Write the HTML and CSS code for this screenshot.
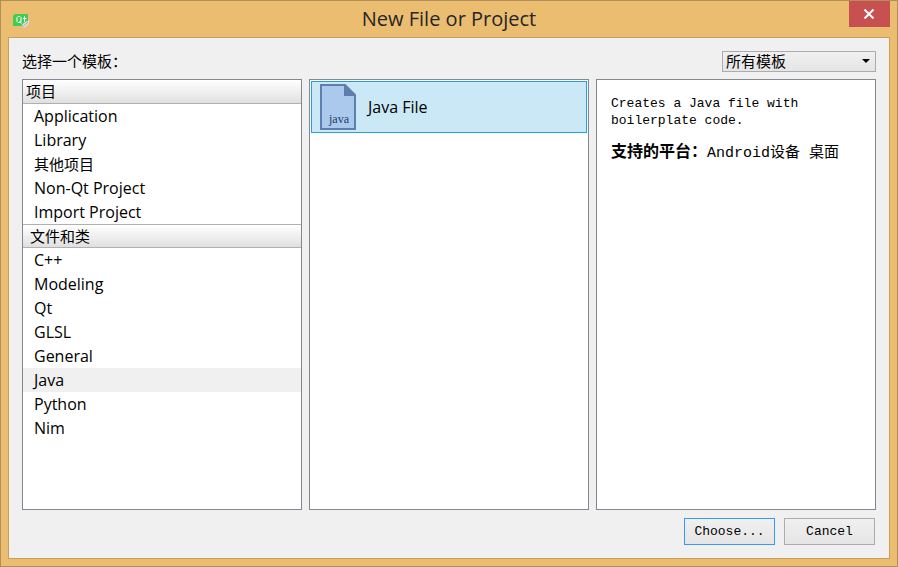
FILE: index.html
```html
<!DOCTYPE html>
<html lang="zh-CN">
<head>
  <meta charset="UTF-8">
  <title>New File or Project</title>
  <link rel="stylesheet" href="styles.css">
</head>
<body>
  <div class="window">
    <header class="titlebar">
      <svg class="app-icon" width="18" height="16" viewBox="0 0 18 16">
        <path d="M2 1H15V11L13 13H0V3Z" fill="#41cd52"/>
        <path d="M8 4.5V8.5L7 9.5H5L4 8.5V4.5L5 3.5H7ZM6.500 8L8.500 10.500M11.500 3V8.500L12.500 9.500M10 5.500H13.500" fill="none" stroke="#fff" stroke-width="1"/>
        <path d="M8.500 15L9.500 11L13 8.500L17 7L15 12L12 14.500Z" fill="#dedede"/>
        <path d="M9 14.500L15 9" stroke="#a8a8a8" fill="none"/>
      </svg>
      <h1>New File or Project</h1>
      <button class="close" type="button" aria-label="Close">
        <svg width="12" height="10" viewBox="0 0 12 10"><path d="M1.500 0.500L10.500 9.500M10.500 0.500L1.500 9.500" stroke="#fff" stroke-width="2"/></svg>
      </button>
    </header>

    <main class="client">
      <div class="top-row">
        <label for="filter">选择一个模板：</label>
        <div class="combo">
          <select id="filter">
            <option>所有模板</option>
          </select>
          <svg class="arrow" width="8" height="4" viewBox="0 0 8 4"><path d="M0 0H8L4 4Z" fill="#000"/></svg>
        </div>
      </div>

      <div class="panels">
        <nav class="panel categories">
          <h2>项目</h2>
          <ul>
            <li>Application</li>
            <li>Library</li>
            <li class="zh">其他项目</li>
            <li>Non-Qt Project</li>
            <li>Import Project</li>
          </ul>
          <h2 class="group">文件和类</h2>
          <ul>
            <li>C++</li>
            <li>Modeling</li>
            <li>Qt</li>
            <li>GLSL</li>
            <li>General</li>
            <li class="current">Java</li>
            <li>Python</li>
            <li>Nim</li>
          </ul>
        </nav>

        <section class="panel templates">
          <div class="template selected">
            <svg width="36" height="46" viewBox="0 0 36 46">
              <path d="M1 1H25L35 11V45H1Z" fill="#abc9ec" stroke="#5d7fae" stroke-width="2"/>
              <path d="M24 0L36 12H24Z" fill="#5d7fae"/>
              <text class="icon-text" x="9" y="39">java</text>
            </svg>
            <span>Java File</span>
          </div>
        </section>

        <section class="panel details">
          <p>Creates a Java file with boilerplate code.</p>
          <p class="platforms"><b>支持的平台：</b>Android设备 桌面</p>
        </section>
      </div>

      <footer class="buttons">
        <button class="btn default" type="button">Choose...</button>
        <button class="btn" type="button">Cancel</button>
      </footer>
    </main>
  </div>
</body>
</html>
```
FILE: styles.css
```css
* {
  box-sizing: border-box;
  margin: 0;
  padding: 0;
}

body {
  height: 100vh;
  font-family: "Open Sans", "Noto Sans CJK SC", sans-serif;
  font-size: 15px;
  color: #000;
}

.window {
  height: 100%;
  display: flex;
  flex-direction: column;
  background: #ebbd71;
  border: 1px solid #b08e55;
  padding: 0 7px 7px;
}

/* title bar */
.titlebar {
  height: 36px;
  display: flex;
  justify-content: space-between;
  align-items: flex-start;
}

.app-icon {
  margin: 12px 18px 0 5px;
}

.titlebar h1 {
  font-size: 20px;
  font-weight: 400;
  line-height: 36px;
  color: #262626;
}

.close {
  width: 41px;
  height: 26px;
  display: flex;
  align-items: center;
  justify-content: center;
  background: #c75050;
  border: none;
}

.client {
  flex: 1;
  min-height: 0;
  display: flex;
  flex-direction: column;
  background: #f0f0f0;
  border: 1px solid #c99f5c;
  padding: 13px;
}

/* template filter */
.top-row {
  display: flex;
  justify-content: space-between;
  margin-bottom: 7px;
  line-height: 21px;
}

.combo {
  position: relative;
  display: flex;
}

.combo select {
  appearance: none;
  width: 154px;
  height: 21px;
  padding: 0 3px;
  border: 1px solid #acacac;
  border-radius: 0;
  background: linear-gradient(#f0f0f0, #e5e5e5);
  font: inherit;
  line-height: 19px;
  color: #000;
}

.combo .arrow {
  position: absolute;
  right: 6px;
  top: 8px;
  pointer-events: none;
}

.panels {
  flex: 1;
  min-height: 0;
  display: grid;
  grid-template-columns: repeat(3, 1fr);
  gap: 7px;
}

.panel {
  min-width: 0;
  background: #fff;
  border: 1px solid #828790;
}

/* categories */
.categories h2 {
  height: 24px;
  padding-left: 3px;
  font-size: 15px;
  font-weight: 400;
  line-height: 23px;
  background: linear-gradient(#fff, #e0e0e0);
  border-bottom: 1px solid #b0b0b0;
}

.categories .group {
  padding-left: 7px;
  border-top: 1px solid #b0b0b0;
}

.categories ul {
  list-style: none;
}

.categories li {
  height: 24px;
  padding-left: 11px;
  font-size: 16px;
  line-height: 24px;
}

.categories .zh {
  font-size: 15px;
}

.categories .current {
  background: #f0f0f0;
}

/* templates */
.templates {
  padding: 1px;
}

.template {
  height: 52px;
  display: flex;
  align-items: center;
  gap: 12px;
  padding: 0 8px;
  font-size: 16px;
}

.selected {
  background: #cbe8f6;
  border: 1px solid #26a0da;
}

.icon-text {
  font-family: "Liberation Serif", serif;
  font-size: 12px;
  fill: #1d3c66;
}

/* description */
.details {
  padding: 15px 14px;
  font-family: "Liberation Mono", "Noto Sans CJK SC", monospace;
  font-size: 13px;
  line-height: 17px;
}

.details .platforms {
  margin-top: 16px;
  font-size: 15px;
}

.details b {
  font-size: 16px;
}

.buttons {
  display: flex;
  justify-content: flex-end;
  gap: 9px;
  margin-top: 8px;
  padding-right: 1px;
}

.btn {
  width: 91px;
  height: 27px;
  border: 1px solid #acacac;
  background: linear-gradient(#f0f0f0, #e5e5e5);
  font-family: "Liberation Mono", monospace;
  font-size: 13px;
  color: #000;
}

.btn.default {
  border-color: #3399ff;
}
```
